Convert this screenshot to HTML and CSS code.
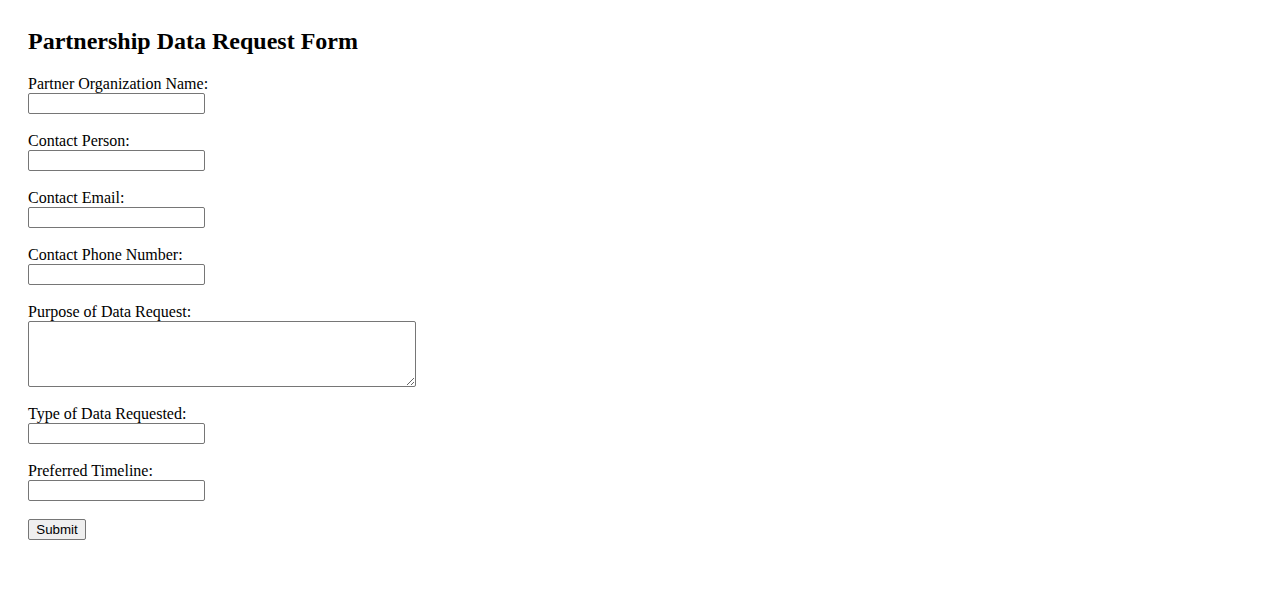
FILE: index.html
```html
<!DOCTYPE html>
<html>
<head>
<meta charset="utf-8">
<title>Partnership Data Request Form</title>
<link rel="stylesheet" href="styles.css">
</head>
<body>
<main class="page">
  <h2 class="title">Partnership Data Request Form</h2>
  <form class="form">
    <div class="field">
      <label class="label" for="org">Partner Organization Name:</label>
      <input class="input" type="text" id="org">
    </div>
    <div class="field">
      <label class="label" for="person">Contact Person:</label>
      <input class="input" type="text" id="person">
    </div>
    <div class="field">
      <label class="label" for="email">Contact Email:</label>
      <input class="input" type="email" id="email">
    </div>
    <div class="field">
      <label class="label" for="phone">Contact Phone Number:</label>
      <input class="input" type="tel" id="phone">
    </div>
    <div class="field">
      <label class="label" for="purpose">Purpose of Data Request:</label>
      <textarea class="textarea" id="purpose"></textarea>
    </div>
    <div class="field">
      <label class="label" for="type">Type of Data Requested:</label>
      <input class="input" type="text" id="type">
    </div>
    <div class="field">
      <label class="label" for="timeline">Preferred Timeline:</label>
      <input class="input" type="text" id="timeline">
    </div>
    <div class="actions">
      <button class="submit" type="submit">Submit</button>
    </div>
  </form>
</main>
</body>
</html>
```

FILE: styles.css
```css
html, body {
  margin: 0;
  padding: 0;
  background: #ffffff;
}

body {
  font-family: "Liberation Serif", "Times New Roman", serif;
  font-size: 16px;
  color: #000000;
}

.page {
  padding: 28px 28px;
}

.title {
  margin: 0 0 20px 0;
  font-size: 24px;
  font-weight: bold;
  line-height: 27px;
}

.form {
  display: flex;
  flex-direction: column;
  align-items: flex-start;
}

.field {
  display: flex;
  flex-direction: column;
  align-items: flex-start;
  margin-bottom: 18px;
}

.label {
  display: block;
  height: 18px;
  line-height: 18px;
}

.input {
  box-sizing: border-box;
  width: 177px;
  height: 21px;
  margin: 0;
  padding: 1px 2px;
  border: 1px solid #767676;
  border-radius: 2px;
  font-family: "Liberation Sans", Arial, sans-serif;
  font-size: 13.333px;
  background: #ffffff;
}

.textarea {
  box-sizing: border-box;
  width: 388px;
  height: 66px;
  margin: 0;
  padding: 2px;
  border: 1px solid #767676;
  border-radius: 2px;
  font-family: "Liberation Mono", monospace;
  font-size: 13.333px;
  background: #ffffff;
  resize: both;
}

.actions {
  display: flex;
}

.submit {
  box-sizing: border-box;
  width: 58px;
  height: 21px;
  margin: 0;
  padding: 1px 6px;
  border: 1px solid #767676;
  border-radius: 2px;
  background: #efefef;
  color: #000000;
  font-family: "Liberation Sans", Arial, sans-serif;
  font-size: 13.333px;
  line-height: 15px;
}
```
